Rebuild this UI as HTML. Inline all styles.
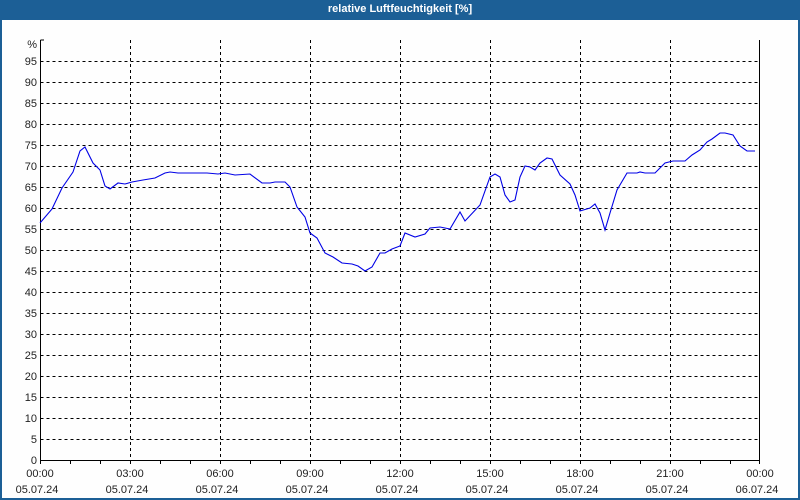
<!DOCTYPE html>
<html><head><meta charset="utf-8"><style>
html,body{margin:0;padding:0;width:800px;height:500px;overflow:hidden;background:#fff}
#f{position:absolute;left:0;top:0;width:800px;height:500px;box-sizing:border-box;border:2px solid #1c5f96;border-top:none;background:#fefefe}
#t{position:absolute;left:0;top:0;width:800px;height:20px;background:#1c5f96;color:#fff;font:bold 11px "Liberation Sans",sans-serif;text-align:center;line-height:19px}
svg{position:absolute;left:0;top:0}
text{font-family:"Liberation Sans",sans-serif;font-size:11px;fill:#222}
</style></head><body>
<div id="f"></div>
<div id="t">relative Luftfeuchtigkeit [%]</div>
<svg width="800" height="500" xmlns="http://www.w3.org/2000/svg">
<g stroke="#000" stroke-width="1" stroke-dasharray="3,3" shape-rendering="crispEdges">
<path d="M40.5 61.5H759 M40.5 82.5H759 M40.5 103.5H759 M40.5 124.5H759 M40.5 145.5H759 M40.5 166.5H759 M40.5 187.5H759 M40.5 208.5H759 M40.5 229.5H759 M40.5 250.5H759 M40.5 271.5H759 M40.5 292.5H759 M40.5 313.5H759 M40.5 334.5H759 M40.5 355.5H759 M40.5 376.5H759 M40.5 397.5H759 M40.5 418.5H759 M40.5 439.5H759"/>
<path d="M130.5 40V460 M220.5 40V460 M310.5 40V460 M400.5 40V460 M490.5 40V460 M580.5 40V460 M670.5 40V460"/>
</g>
<g stroke="#000" stroke-width="1" shape-rendering="crispEdges" fill="none">
<path d="M40.5 40V460.5H759.5V40"/>
<path d="M40.5 40H44 M40.5 460V464 M70.5 460V464 M100.5 460V464 M130.5 460V464 M160.5 460V464 M190.5 460V464 M220.5 460V464 M250.5 460V464 M280.5 460V464 M310.5 460V464 M340.5 460V464 M370.5 460V464 M400.5 460V464 M430.5 460V464 M460.5 460V464 M490.5 460V464 M520.5 460V464 M550.5 460V464 M580.5 460V464 M610.5 460V464 M640.5 460V464 M670.5 460V464 M700.5 460V464 M730.5 460V464 M759.5 460V464"/>
</g>
<polyline fill="none" stroke="#0000e6" stroke-width="1.1" points="40,223 52,209 62,188 73,172 80,151 85,147 93,163 100,170 105,186 110,189 118,183 125,184 132,182 143,180 155,178 165,173 170,172 178,173 197,173 207,173 218,174 225,173 235,175 250,174 262,183 270,183 275,182 285,182 290,187 297,207 305,217 310,233 317,238 325,253 333,257 342,263 352,264 358,266 365,271 372,267 380,253 385,253 392,249 400,246 405,233 415,237 425,234 430,228 440,227 450,229 460,212 465,221 480,205 490,177 495,174 500,177 505,195 510,202 515,200 520,177 525,166 530,167 535,170 540,163 547,158 552,159 560,175 570,184 575,195 580,211 590,208 595,204 600,213 605,230 610,213 617,190 627,173 637,173 640,172 645,173 655,173 665,163 673,161 685,161 692,155 700,150 707,142 712,139 720,133 725,133 733,135 740,146 747,151 755,151"/>
<g text-anchor="end">
<text x="37" y="48">%</text>
<text x="37" y="65">95</text><text x="37" y="86">90</text><text x="37" y="107">85</text><text x="37" y="128">80</text><text x="37" y="149">75</text><text x="37" y="170">70</text><text x="37" y="191">65</text><text x="37" y="212">60</text><text x="37" y="233">55</text><text x="37" y="254">50</text><text x="37" y="275">45</text><text x="37" y="296">40</text><text x="37" y="317">35</text><text x="37" y="338">30</text><text x="37" y="359">25</text><text x="37" y="380">20</text><text x="37" y="401">15</text><text x="37" y="422">10</text><text x="37" y="443">5</text><text x="37" y="464">0</text>
</g>
<g text-anchor="middle">
<text x="40" y="477">00:00</text><text x="130" y="477">03:00</text><text x="220" y="477">06:00</text><text x="310" y="477">09:00</text><text x="400" y="477">12:00</text><text x="490" y="477">15:00</text><text x="580" y="477">18:00</text><text x="670" y="477">21:00</text><text x="760" y="477">00:00</text>
<text x="37" y="493">05.07.24</text><text x="127" y="493">05.07.24</text><text x="217" y="493">05.07.24</text><text x="307" y="493">05.07.24</text><text x="397" y="493">05.07.24</text><text x="487" y="493">05.07.24</text><text x="577" y="493">05.07.24</text><text x="667" y="493">05.07.24</text><text x="757" y="493">06.07.24</text>
</g>
</svg>
</body></html>
